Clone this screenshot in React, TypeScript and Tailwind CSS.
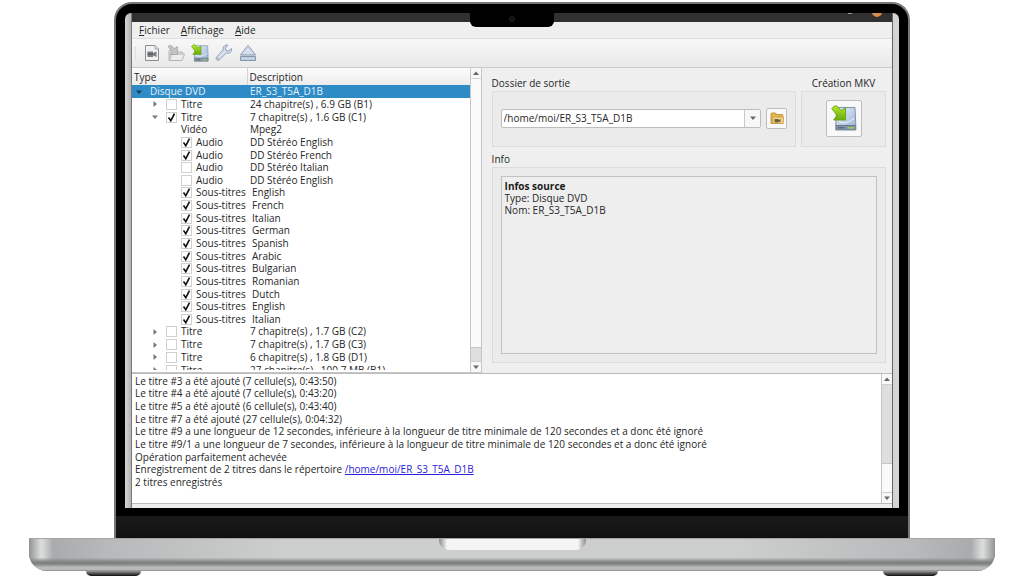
import React, { useState } from 'react';
import clsx from 'clsx';

interface Row {
  kind: 'disc' | 'title' | 'plain' | 'track';
  type: string;
  desc: string;
  checked?: boolean;
  open?: boolean;
}

const languages = ['English', 'French', 'Italian', 'German', 'Spanish', 'Arabic', 'Bulgarian', 'Romanian', 'Dutch', 'English', 'Italian'];

const rows: Row[] = [
  { kind: 'disc', type: 'Disque DVD', desc: 'ER_S3_T5A_D1B', open: true },
  { kind: 'title', type: 'Titre', desc: '24 chapitre(s) , 6.9 GB (B1)' },
  { kind: 'title', type: 'Titre', desc: '7 chapitre(s) , 1.6 GB (C1)', checked: true, open: true },
  { kind: 'plain', type: 'Vidéo', desc: 'Mpeg2' },
  { kind: 'track', type: 'Audio', desc: 'DD Stéréo English', checked: true },
  { kind: 'track', type: 'Audio', desc: 'DD Stéréo French', checked: true },
  { kind: 'track', type: 'Audio', desc: 'DD Stéréo Italian' },
  { kind: 'track', type: 'Audio', desc: 'DD Stéréo English' },
  ...languages.map((desc): Row => ({ kind: 'track', type: 'Sous-titres', desc, checked: true })),
  { kind: 'title', type: 'Titre', desc: '7 chapitre(s) , 1.7 GB (C2)' },
  { kind: 'title', type: 'Titre', desc: '7 chapitre(s) , 1.7 GB (C3)' },
  { kind: 'title', type: 'Titre', desc: '6 chapitre(s) , 1.8 GB (D1)' },
  { kind: 'title', type: 'Titre', desc: '27 chapitre(s) , 100.7 MB (B1)' },
];

const log = [
  'Le titre #3 a été ajouté (7 cellule(s), 0:43:50)',
  'Le titre #4 a été ajouté (7 cellule(s), 0:43:20)',
  'Le titre #5 a été ajouté (6 cellule(s), 0:43:40)',
  'Le titre #7 a été ajouté (27 cellule(s), 0:04:32)',
  'Le titre #9 a une longueur de 12 secondes, inférieure à la longueur de titre minimale de 120 secondes et a donc été ignoré',
  'Le titre #9/1 a une longueur de 7 secondes, inférieure à la longueur de titre minimale de 120 secondes et a donc été ignoré',
  'Opération parfaitement achevée',
];

/* ---------- icons ---------- */

function FileIcon() {
  return (
    <svg width="18" height="18" viewBox="0 0 18 18">
      <path d="M2.5 1.5h9.500l3.500 3.500v11.500h-13z" fill="#f1f2f4" stroke="#8d8d8d" />
      <path d="M12 1.500v3.500h3.500" fill="#ddd" stroke="#9a9a9a" strokeWidth=".8" />
      <path d="M4.500 7.500h5.500v1.500l3.500-1.500v5.500l-3.500-1.500v1.500h-5.500z" fill="#7b7f85" />
      <path d="M4.500 10.300h5.500" stroke="#5d6268" strokeWidth="1.500" />
    </svg>
  );
}

function OpenIcon() {
  return (
    <svg width="18" height="18" viewBox="0 0 18 18">
      <path d="M2 16v-9.500h5l1.500 1.500h7v2" fill="#e0e0e0" stroke="#b8b8b8" />
      <path d="M2 16.500l3-6.500h12.500l-2.500 6.500z" fill="#ececec" stroke="#b4b4b4" />
      <path d="M1 2.500q1.500-1.500 3-1l3.500 3 3-2v8h-8l2.500-3z" fill="#c3c3c3" stroke="#a6a6a6" strokeWidth=".8" />
    </svg>
  );
}

function DiskIcon({ size }: { size: number }) {
  return (
    <svg width={size} height={size} viewBox="0 0 26 26">
      <defs>
        <linearGradient id="disk" x1="0" y1="0" x2="1" y2="1">
          <stop offset="0" stopColor="#e4edf8" />
          <stop offset="1" stopColor="#a2b9d8" />
        </linearGradient>
        <linearGradient id="arrow" x1="0" y1="0" x2="0" y2="1">
          <stop offset="0" stopColor="#b4e62e" />
          <stop offset="1" stopColor="#67ad0b" />
        </linearGradient>
      </defs>
      <path d="M5.500 2.500h18.500l.8 18h-20z" fill="url(#disk)" stroke="#7f93ab" strokeWidth="1" />
      <path d="M8 16.500q6 4 15-3" fill="none" stroke="#eef4fb" strokeWidth="1" />
      <path d="M4.800 20.500h20v4.500h-20z" fill="#8496a8" stroke="#62748a" strokeWidth=".8" />
      <path d="M7 22.800h7" stroke="#4c5a68" strokeWidth="1.600" strokeDasharray="1.500 .8" />
      <path d="M17 22.800h6" stroke="#9ccf45" strokeWidth="1.600" />
      <path d="M.8 3.500q1.700-2.800 4.700-2.800l4.700 4.800 4.300-2.500v12h-12l3.500-4.500z" fill="url(#arrow)" stroke="#6aa30e" strokeWidth=".9" strokeLinejoin="round" />
    </svg>
  );
}

function WrenchIcon() {
  return (
    <svg width="18" height="18" viewBox="0 0 18 18">
      <path
        d="M16.500 4.500l-3 2.500-2.500-.7-.6-2.300 2.600-2.800c-3-.8-5.600 1.600-4.800 4.600l-6.500 7.200c-1.700 2 1 4.400 2.800 2.700l6.800-6.700c3.600 1 6-1.500 5.200-4.500z"
        fill="#d5e0ec" stroke="#8397ad" strokeWidth=".9" strokeLinejoin="round"
      />
      <circle cx="3.200" cy="14.500" r=".8" fill="#8397ad" />
    </svg>
  );
}

function EjectIcon() {
  return (
    <svg width="18" height="18" viewBox="0 0 18 18">
      <path d="M9 1.500l7.500 9.500h-15z" fill="#d6e1f0" stroke="#8494ab" strokeLinejoin="round" />
      <path d="M1.500 12.500h15v4h-15z" fill="#c3d1e5" stroke="#8494ab" strokeLinejoin="round" />
    </svg>
  );
}

function FolderIcon() {
  return (
    <svg width="14" height="14" viewBox="0 0 14 14">
      <path d="M1 12.500v-9.500q0-1 1-1h3.500l1.200 1.500h5.300q.8 0 .8.800v8.200z" fill="#e6b64e" stroke="#bd8f35" strokeWidth=".9" />
      <path d="M2.500 12.500l.5-6.500h10.500l-.5 6.500z" fill="#f5d68b" stroke="#c69a40" strokeWidth=".8" />
      <path d="M4.500 8h4v1l2-1v3.500l-2-1v1h-4z" fill="#6d6139" />
    </svg>
  );
}

function Triangle({ dir }: { dir: 'up' | 'down' | 'right' }) {
  const d = { up: 'M0 5l3-3.500 3 3.500z', down: 'M0 1.500h6l-3 3.500z', right: 'M1.500 0l3.500 3-3.500 3z' }[dir];
  return (
    <svg width="6" height="6" viewBox="0 0 6 6" className="shrink-0">
      <path d={d} fill="currentColor" />
    </svg>
  );
}

/* ---------- controls ---------- */

function CheckBox({ label, initial }: { label: string; initial: boolean }) {
  const [checked, setChecked] = useState(initial);
  return (
    <label className="flex items-center gap-1">
      <span className="grid size-[11px] shrink-0">
        <input
          type="checkbox"
          checked={checked}
          onChange={(e) => setChecked(e.target.checked)}
          className="col-start-1 row-start-1 size-[11px] appearance-none border border-[#d0d0d0] bg-white"
        />
        {checked && (
          <svg viewBox="0 0 11 11" className="pointer-events-none col-start-1 row-start-1 size-[11px]">
            <path d="M2.500 5.500l2.300 3.200 3.700-7" fill="none" stroke="#111" strokeWidth="1.600" />
          </svg>
        )}
      </span>
      {label}
    </label>
  );
}

function ScrollBar({ low }: { low?: boolean }) {
  return (
    <div className="flex w-[11px] shrink-0 flex-col border-l border-[#c6c6c6] bg-[#dedede] text-[#666]">
      <button aria-label="Défiler vers le haut" className="grid h-[11px] place-items-center border-b border-[#d0d0d0] bg-[#f8f8f8]">
        <Triangle dir="up" />
      </button>
      {low && <div className="flex-1" />}
      <div className={clsx('bg-[#fafafa]', low ? 'h-[29px] border-t border-[#c6c6c6]' : 'flex-1 border-b border-[#c6c6c6]')} />
      {!low && <div className="h-[13px]" />}
      <button aria-label="Défiler vers le bas" className="grid h-[11px] place-items-center border-t border-[#d0d0d0] bg-[#f8f8f8]">
        <Triangle dir="down" />
      </button>
    </div>
  );
}

function TreeRow({ row }: { row: Row }) {
  const isDisc = row.kind === 'disc';
  return (
    <tr className={clsx(isDisc && 'bg-[#2f8bc6] text-[#e4f1fa]')}>
      <td className="p-0 pt-px">
        <div
          className={clsx(
            'flex items-center',
            isDisc && 'gap-2 pl-1',
            row.kind === 'title' && 'gap-2 pl-5',
            (row.kind === 'plain' || row.kind === 'track') && 'pl-[49px]',
          )}
        >
          {(isDisc || row.kind === 'title') && (
            <span className={isDisc ? 'text-[#123f61]' : 'text-[#777]'}>
              <Triangle dir={row.open ? 'down' : 'right'} />
            </span>
          )}
          {isDisc || row.kind === 'plain' ? row.type : <CheckBox label={row.type} initial={!!row.checked} />}
        </div>
      </td>
      <td className={clsx('p-0 pt-px', row.type === 'Sous-titres' ? 'pl-[5px]' : 'pl-[3px]')}>{row.desc}</td>
    </tr>
  );
}

function MenuButton({ label }: { label: string }) {
  return (
    <button>
      <span className="underline">{label[0]}</span>
      {label.slice(1)}
    </button>
  );
}

const tools = [
  { label: 'Ouvrir un fichier', icon: <FileIcon /> },
  { label: 'Ouvrir un dossier', icon: <OpenIcon /> },
  { label: 'Créer le MKV', icon: <DiskIcon size={18} /> },
  { label: 'Préférences', icon: <WrenchIcon /> },
  { label: 'Éjecter', icon: <EjectIcon /> },
];

function AppWindow() {
  const [folder, setFolder] = useState('/home/moi/ER_S3_T5A_D1B');

  return (
    <div className="min-w-0 flex-1 bg-[#efefef]">
      <div className="flex h-[9px] items-start justify-end gap-5 overflow-hidden bg-[#303030] pr-[10px]">
        <span className="h-px w-1 bg-[#999]" />
        <span className="-mt-[6px] size-[10px] rounded-full bg-[#d98b4c]" />
      </div>

      <nav className="flex h-[17px] items-center gap-[11px] border-b border-[#dedede] pt-px pl-[7px]">
        <MenuButton label="Fichier" />
        <MenuButton label="Affichage" />
        <MenuButton label="Aide" />
      </nav>

      <div className="flex h-[29px] items-center gap-[6px] border-b border-[#c9c9c9] bg-linear-to-b from-[#f7f7f7] to-[#e9e9e9] pl-[3px]">
        <span className="h-3 w-[2px] border-l border-dotted border-[#cfcfcf]" />
        {tools.map((t) => (
          <button key={t.label} aria-label={t.label}>{t.icon}</button>
        ))}
      </div>

      <div className="flex h-[305px]">
        <div className="flex w-[46%] shrink-0 border-r border-b border-[#c6c6c6] bg-white">
          <div className="h-[302px] min-w-0 flex-1 overflow-hidden">
            <table className="h-[308px] w-full table-fixed border-collapse text-left">
              <colgroup>
                <col className="w-[115px]" />
                <col />
              </colgroup>
              <thead>
                <tr className="h-[17px] bg-linear-to-b from-[#fcfcfc] to-[#ececec]">
                  <th className="border-r border-[#d2d2d2] p-0 pt-px pl-[2px] font-normal">Type</th>
                  <th className="p-0 pt-px pl-[2px] font-normal">Description</th>
                </tr>
              </thead>
              <tbody>
                {rows.map((row, i) => <TreeRow key={i} row={row} />)}
              </tbody>
            </table>
          </div>
          <ScrollBar />
        </div>

        <div className="flex min-w-0 flex-1 flex-col pt-[7px] pr-[6px] pb-[10px] pl-[10px]">
          <div className="flex gap-[5px]">
            <div className="min-w-0 flex-1">
              <label htmlFor="folder" className="flex h-4 items-center">Dossier de sortie</label>
              <div className="flex h-14 items-center gap-[5px] border border-[#dcdcdc] bg-[#ebebeb] px-2 pb-[2px]">
                <div className="flex h-[19px] min-w-0 flex-1 rounded-xs border border-[#bdbdbd] bg-white">
                  <input
                    id="folder"
                    value={folder}
                    onChange={(e) => setFolder(e.target.value)}
                    className="min-w-0 flex-1 pl-[2px] outline-none"
                  />
                  <button aria-label="Dossiers récents" className="grid w-4 place-items-center border-l border-[#c8c8c8] bg-[#f7f7f7] text-[#666]">
                    <Triangle dir="down" />
                  </button>
                </div>
                <button aria-label="Choisir un dossier" className="grid size-[21px] place-items-center rounded-xs border border-[#bdbdbd] bg-[#f9f9f9]">
                  <FolderIcon />
                </button>
              </div>
            </div>

            <div className="w-[85px] shrink-0">
              <h2 className="flex h-4 items-center justify-center whitespace-nowrap">Création MKV</h2>
              <div className="grid h-14 place-items-center border border-[#dcdcdc] bg-[#ebebeb] pb-[2px]">
                <button aria-label="Création MKV" className="grid h-[37px] w-9 place-items-center rounded-xs border border-[#bdbdbd] bg-[#f9f9f9]">
                  <DiskIcon size={26} />
                </button>
              </div>
            </div>
          </div>

          <h2 className="mt-1 flex h-4 items-center">Info</h2>
          <div className="flex flex-1 border border-[#dcdcdc] bg-[#ebebeb] p-2">
            <div className="flex-1 border border-[#c2c2c2] bg-[#eee] p-[3px] leading-3">
              <p className="font-bold text-[#1c1c1c]">Infos source</p>
              <p>Type: Disque DVD</p>
              <p>Nom: ER_S3_T5A_D1B</p>
            </div>
          </div>
        </div>
      </div>

      <div className="flex h-[131px] border-y border-[#bcbcbc] bg-white">
        <div className="min-w-0 flex-1 overflow-hidden pt-px pl-[3px]">
          <div className="grid h-[114px] auto-rows-fr items-center whitespace-nowrap">
            {log.map((line) => <p key={line}>{line}</p>)}
            <p>
              Enregistrement de 2 titres dans le répertoire{' '}
              <a href="#sortie" className="text-[#2a22d8] underline">/home/moi/ER_S3_T5A_D1B</a>
            </p>
            <p>2 titres enregistrés</p>
          </div>
        </div>
        <ScrollBar low />
      </div>
      <div className="h-1" />
    </div>
  );
}

export default function App() {
  return (
    <div className="min-h-screen w-full overflow-hidden bg-white pt-[2px] font-['Open_Sans','Noto_Sans',sans-serif] text-[10px] leading-[11px] text-[#262626]">
      <div className="relative mx-[114px] rounded-t-[18px] border-x-2 border-t-2 border-[#777] bg-black">
        <div className="mx-[9px] flex overflow-hidden rounded-t-md pt-[9px]">
          <div className="w-[7px] shrink-0 rounded-tl-md border-r border-[#777] bg-linear-to-r from-[#d4d4d4] to-[#b4b4b4]" />
          <AppWindow />
          <div className="w-[7px] shrink-0 rounded-tr-md border-l border-[#666] bg-[#d2d5d5]" />
        </div>
        <div className="mt-2 h-[22px] bg-linear-to-b from-[#1b1b1b] to-[#111]" />
        <div className="absolute top-2 left-1/2 grid h-[15px] w-[84px] -translate-x-1/2 justify-center rounded-b-md bg-black pt-1">
          <span className="size-[6px] rounded-full border border-[#1d1f24] bg-[#10131a]" />
        </div>
      </div>

      <div className="mx-[29px] h-[33px] rounded-b-[18px] bg-linear-to-r from-[#8f8f8f] via-[#cdcfcf] to-[#8f8f8f]">
        <div className="flex h-full justify-center rounded-b-[18px] border-t border-[#a5a5a5] bg-[linear-gradient(to_bottom,transparent_58%,#7f8283_72%,#7f8283_78%,#b9baba_88%,#b9baba_95%,#888_100%),linear-gradient(to_right,#929292_0,#dcdddd_12px,#cfd0d0_16px,#a9abac_24px,#b7b9ba_80px,#cdcfcf_260px,#cdcfcf_calc(100%-260px),#b7b9ba_calc(100%-80px),#a9abac_calc(100%-24px),#cfd0d0_calc(100%-16px),#dcdddd_calc(100%-12px),#929292_100%)]">
          <div className="h-[11px] w-[147px] rounded-b-[10px] bg-[linear-gradient(to_right,#8b8b8b,#f5f5f5_8px,#f5f5f5_calc(100%-8px),#8b8b8b)]" />
        </div>
      </div>
      <div className="flex justify-between px-[86px]">
        <div className="h-[5px] w-[55px] rounded-b-lg bg-linear-to-b from-[#999] to-[#111]" />
        <div className="h-[5px] w-[55px] rounded-b-lg bg-linear-to-b from-[#999] to-[#111]" />
      </div>
    </div>
  );
}
